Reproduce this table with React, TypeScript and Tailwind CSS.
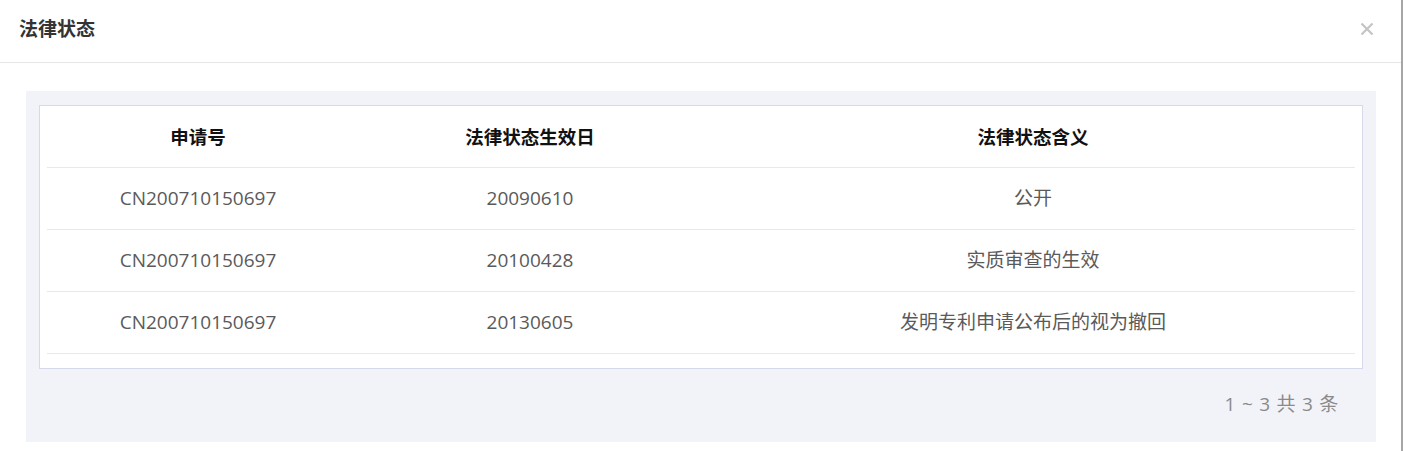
import React from "react";

const rows = [
  { no: "CN200710150697", date: "20090610", meaning: "公开" },
  { no: "CN200710150697", date: "20100428", meaning: "实质审查的生效" },
  { no: "CN200710150697", date: "20130605", meaning: "发明专利申请公布后的视为撤回" },
];

const font = { fontFamily: '"Open Sans", "Noto Sans CJK SC", "Noto Sans", sans-serif' };

export default function App() {
  return (
    <div className="w-[1404px] h-[451px] bg-white overflow-hidden" style={font}>
      <div className="w-[1403px] h-full border-r-2 border-[#a6a6a6] flex flex-col">
        <div className="h-[63px] shrink-0 border-b border-[#e6e6e6] flex items-center justify-between pl-[19px] pr-[27px] pb-[4px]">
          <span className="text-[19px] font-bold text-[#333333] leading-none">法律状态</span>
          <svg width="14" height="14" viewBox="0 0 14 14">
            <path d="M1.5 1.5 L12.5 12.5 M12.5 1.5 L1.5 12.5" stroke="#c4c4c4" strokeWidth="2.2" strokeLinecap="butt" />
          </svg>
        </div>
        <div className="pt-[28px] pl-[26px] pr-[25px]">
          <div className="bg-[#f2f3f8] h-[351px] pt-[14px] px-[13px] flex flex-col">
            <div className="bg-white border border-[#d6d9ea] px-[7px] pb-[14px]">
              <div className="grid grid-cols-[302px_362px_1fr] h-[62px] items-center border-b border-[#e9e9e9] text-[18.5px] font-bold text-[#111111]">
                <div className="text-center">申请号</div>
                <div className="text-center">法律状态生效日</div>
                <div className="text-center">法律状态含义</div>
              </div>
              {rows.map((r, i) => (
                <div
                  key={i}
                  className="grid grid-cols-[302px_362px_1fr] h-[62px] items-center border-b border-[#e9e9e9] text-[19px] text-[#5a5a5a]"
                >
                  <div className="text-center">{r.no}</div>
                  <div className="text-center">{r.date}</div>
                  <div className="text-center">{r.meaning}</div>
                </div>
              ))}
            </div>
            <div className="flex-1 flex items-center justify-end pr-[24px] pb-[2px]">
              <span className="text-[19px] text-[#8a8a8a] tracking-[0.75px]">1 ~ 3 共 3 条</span>
            </div>
          </div>
        </div>
      </div>
    </div>
  );
}
